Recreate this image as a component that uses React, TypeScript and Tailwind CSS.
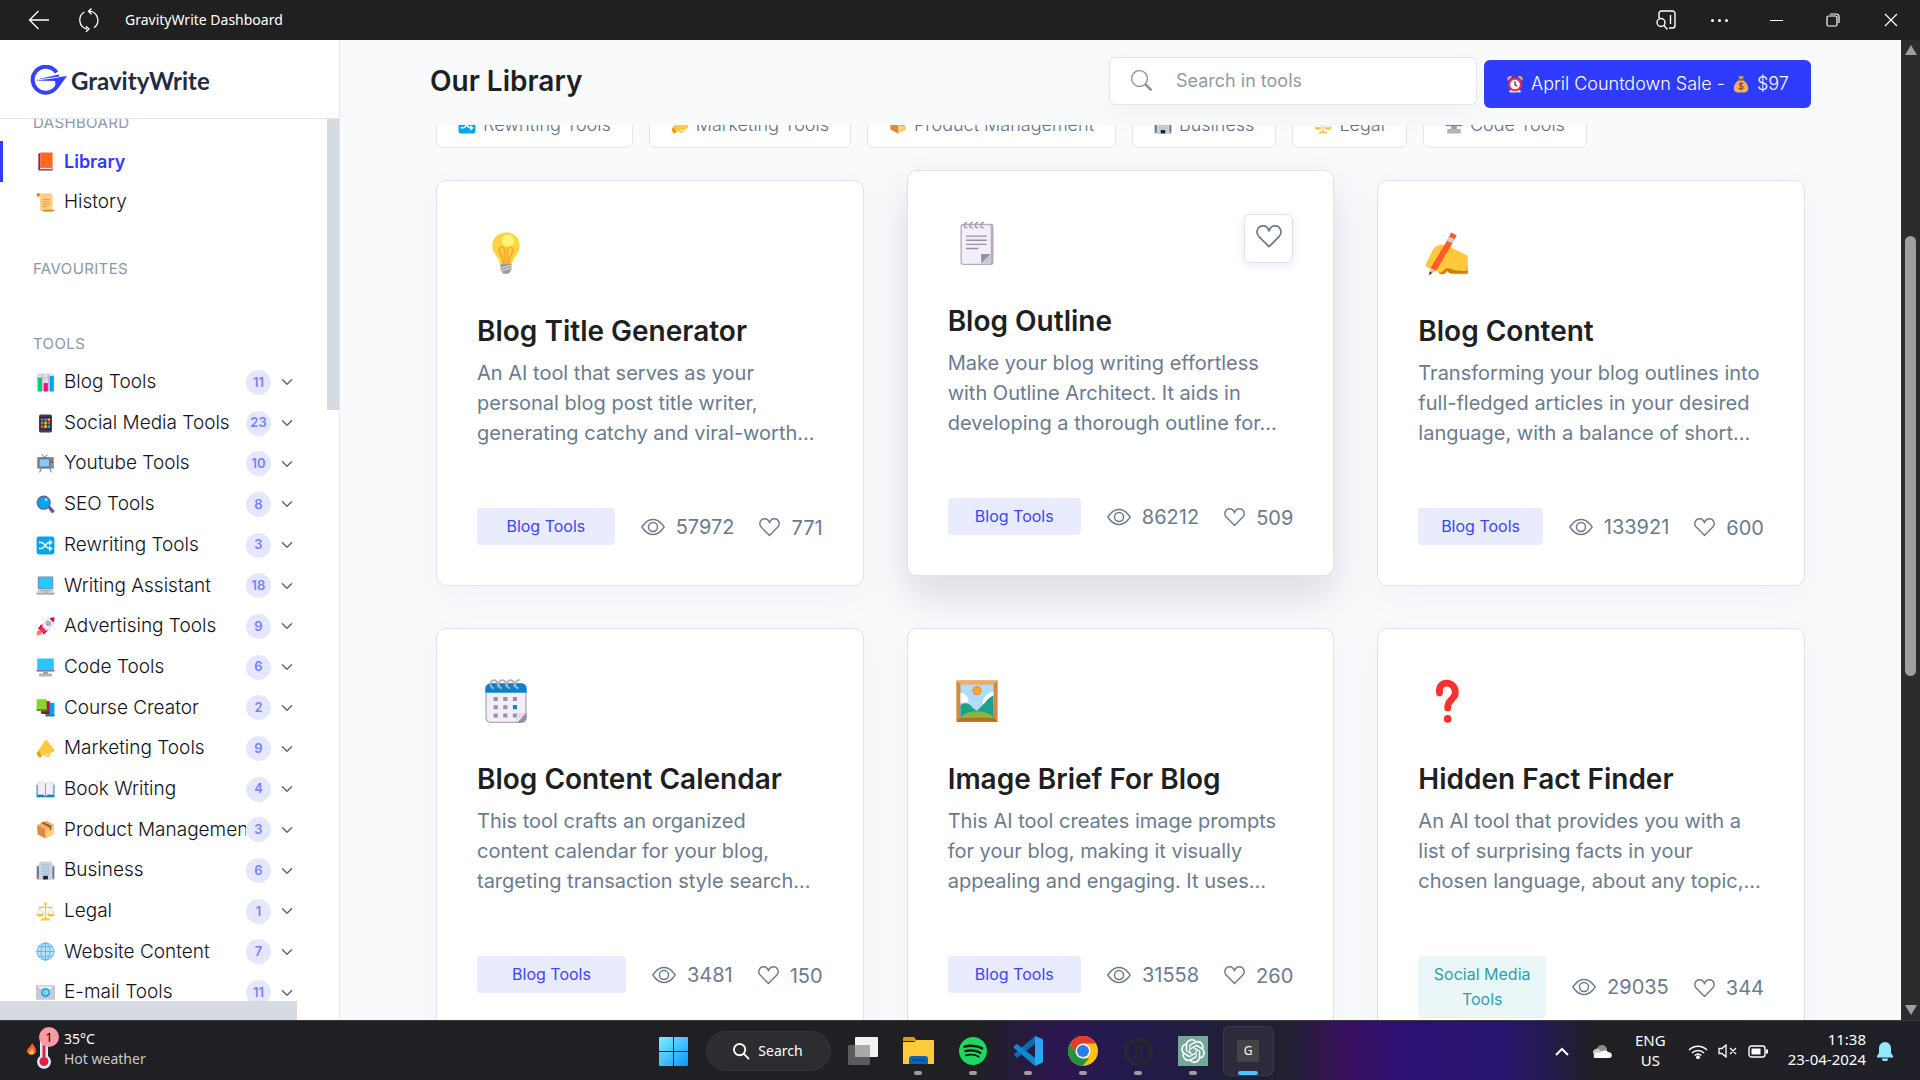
import type { ReactNode } from "react";
import { BsEye, BsSearch, BsChevronDown } from "react-icons/bs";
import { SiSpotify, SiOpenai } from "react-icons/si";

const artwork: Record<string, ReactNode> = {
  redBook: (
    <>
      <path d="M5 2h2v27H5a2 2 0 0 1-1-2V4a2 2 0 0 1 1-2z" fill="#9c1c4f" />
      <path d="M4 26h24v4a1 1 0 0 1-1 1H6a2 2 0 0 1-2-2z" fill="#9c1c4f" />
      <path d="M7 27h20v2H7z" fill="#f3eef8" />
      <rect x="7" y="1" width="21" height="25" rx="1" fill="#ff6723" />
    </>
  ),
  scroll: (
    <>
      <path d="M4 1h20a4 4 0 0 1 4 4v24a2 2 0 0 1-2 2H11a4 4 0 0 1-4-4V5z" fill="#ffce7c" />
      <path d="M1 3a2 2 0 0 1 5-1c1 1 1 3 0 4H2C1 5 1 4 1 3z" fill="#d3883e" />
      <path d="M14 28h17c0 2-1 3-3 3H13c-2 0-2-2 1-3z" fill="#d3883e" />
      <path d="M11 11h13M11 15h13M11 19h13M11 23h7" stroke="#e39d54" strokeWidth="1.6" />
    </>
  ),
  barChart: (
    <>
      <rect x="1" y="1" width="30" height="30" rx="3" fill="#e1d8ec" />
      <path d="M1 8h30M11 1v30M21 1v30" stroke="#b4acbc" strokeWidth="1" />
      <rect x="3" y="8" width="7" height="23" rx="1" fill="#00d26a" />
      <rect x="13" y="17" width="7" height="14" rx="1" fill="#f70a8d" />
      <rect x="23" y="5" width="7" height="26" rx="1" fill="#00a6ed" />
    </>
  ),
  phone: (
    <>
      <rect x="5" y="1" width="22" height="30" rx="3" fill="#433b6b" />
      <rect x="7" y="5" width="18" height="21" fill="#1c1c1c" />
      <path d="M8 7h5v5H8zM19 12h5v6h-5zM8 18h5v6H8z" fill="#f8512f" />
      <path d="M13 7h6v5h-6zM8 12h5v6H8zM19 18h5v6h-5z" fill="#2a9fd8" />
      <path d="M19 7h5v5h-5zM13 12h6v6h-6zM13 18h6v6h-6z" fill="#ffb02e" />
      <path d="M13 7v17M19 7v17M8 12h16M8 18h16" stroke="#1c1c1c" strokeWidth="1" />
    </>
  ),
  tv: (
    <>
      <path d="m10 1 5 5 4-5M9 24l-3 7M23 24l3 7" stroke="#636363" strokeWidth="1.6" fill="none" />
      <rect x="2" y="5" width="28" height="20" rx="2" fill="#8f8b90" />
      <rect x="5" y="8" width="18" height="14" rx="2" fill="#83cbff" stroke="#5a5660" strokeWidth="1.4" />
      <circle cx="27" cy="9.500" r="1.500" fill="#f8312f" />
      <circle cx="27" cy="14" r="1.200" fill="#402a32" />
    </>
  ),
  magnifier: (
    <>
      <path d="m19 20 3-3 9 9c1 3-2 5-5 4z" fill="#635994" />
      <circle cx="13" cy="13" r="12" fill="#635994" />
      <circle cx="13" cy="13" r="10" fill="#00a6ed" />
      <circle cx="17" cy="8" r="2.500" fill="#9fe0ff" />
    </>
  ),
  shuffle: (
    <>
      <rect x="1" y="1" width="30" height="30" rx="4" fill="#00a6ed" />
      <path d="M5 11h4c6 0 7 10 13 10h3M5 21h4c6 0 7-10 13-10h3" stroke="#fff" strokeWidth="2.500" fill="none" />
      <path d="m22 6 6 5-6 5zM22 16l6 5-6 5z" fill="#fff" />
    </>
  ),
  laptop: (
    <>
      <rect x="3" y="1" width="26" height="21" rx="1" fill="#8878a8" />
      <rect x="4.500" y="2" width="23" height="19" fill="#26c9fc" />
      <path d="M4 22h24l3 7v2H1v-2z" fill="#d3d3d3" />
      <path d="M1 29h30v2H1z" fill="#9b9b9b" />
      <path d="M6 24h20M11 27h10" stroke="#999" strokeWidth="1.200" />
    </>
  ),
  rocket: (
    <>
      <path d="M1 31c0-5 1-8 5-10l5 5c-2 4-6 5-10 5z" fill="#ff8257" />
      <path d="m3 20 5-7 8-1-4 12-3-3zM20 16l-1 8-7 6-1-5z" fill="#ca0b4a" />
      <path d="M31 1c-9 0-17 6-21 15l-1 5 3 3 5-1C26 19 31 10 31 1z" fill="#f4f4f4" stroke="#d58aa0" strokeWidth=".8" />
      <path d="M31 1c-3 0-6 0-8 2l6 6c2-3 2-5 2-8z" fill="#ca0b4a" />
      <circle cx="21" cy="11" r="3.600" fill="#83cbff" stroke="#8878a8" strokeWidth="1.400" />
      <path d="m10 15-4 7 4 4 7-4z" fill="#f92f60" />
    </>
  ),
  desktop: (
    <>
      <rect x="2" y="1" width="28" height="20" rx="1" fill="#26c9fc" />
      <path d="M1 20h30v3H1z" fill="#8878a8" />
      <path d="M12 23h8v4h-8z" fill="#9b9b9b" />
      <rect x="5" y="26" width="22" height="5" rx="1" fill="#b4b4b4" />
    </>
  ),
  terminal: (
    <>
      <rect x="2" y="1" width="28" height="14" rx="1" fill="#26c9fc" />
      <path d="M1 14h30v4H1z" fill="#8878a8" />
      <path d="M11 18h10v5H11z" fill="#9b9b9b" />
      <rect x="4" y="23" width="24" height="8" rx="1" fill="#b4b4b4" />
    </>
  ),
  books: (
    <>
      <path d="M18 8h13v22H16z" fill="#00a6ed" />
      <path d="M16 28h15v3H16z" fill="#0074ba" />
      <path d="M10 5h13v21H8z" fill="#ca0b4a" />
      <path d="M10 24h13v3H10z" fill="#990838" />
      <path d="M1 2h17v18H1z" fill="#86d72f" />
      <path d="M1 19h17v3H3a2 2 0 0 1-2-2z" fill="#44911b" />
    </>
  ),
  megaphone: (
    <>
      <path d="m14 25 9-3c3 6-6 10-9 3z" fill="none" stroke="#ffb02e" strokeWidth="2" />
      <path d="M15 2c2-1 4 0 5 2l11 14c0 2-1 4-3 4L8 29l-5-8z" fill="#ffc83d" />
      <path d="m2 22 3-2 5 9-3 2C4 31 0 25 2 22z" fill="#e39d1e" />
    </>
  ),
  openBook: (
    <>
      <path d="M1 8h30v20a1 1 0 0 1-1 1H2a1 1 0 0 1-1-1z" fill="#0084ce" />
      <path d="M3 5c5-2 10-2 13 1 3-3 8-3 13-1v20c-5-1-10-1-13 2-3-3-8-3-13-2z" fill="#f3eef8" stroke="#cdc4d6" strokeWidth="1" />
      <path d="M16 6v20" stroke="#998ea4" strokeWidth="1.500" />
    </>
  ),
  parcel: (
    <>
      <path d="M2 9 17 1l13 7v16l-14 7L3 24z" fill="#f3ad61" />
      <path d="M2 9l14 8v14L3 24z" fill="#dc8744" />
      <path d="M30 8l-14 9v14l14-7z" fill="#ffce7c" />
      <path d="m9 5 14 8v5l3-2v-6L12 3z" fill="#9b5a35" />
    </>
  ),
  office: (
    <>
      <path d="M1 8h30v23H1z" fill="#8f95a0" />
      <path d="M7 1h18l3 4v26H5V5z" fill="#cdd1d8" />
      <path d="M10 5h3v3h-3zM14.500 5h3v3h-3zM19 5h3v3h-3zM10 10h3v3h-3zM14.500 10h3v3h-3zM19 10h3v3h-3zM10 15h3v3h-3zM14.500 15h3v3h-3zM19 15h3v3h-3zM10 20h3v3h-3zM14.500 20h3v3h-3zM19 20h3v3h-3z" fill="#83cbff" />
      <path d="M12 25h8v6h-8z" fill="#222" />
      <path d="M2 11h2v17H2zM28 11h2v17h-2z" fill="#636a75" />
    </>
  ),
  scales: (
    <>
      <path d="M15 3h2v25h-2zM4 8h24v2H4z" fill="#d9c19a" />
      <circle cx="16" cy="3" r="2" fill="#ffb02e" />
      <path d="M7 9 2 20M7 9l5 11M25 9l-5 11M25 9l5 11" stroke="#c5bcae" strokeWidth="1" />
      <path d="M1 20h12c0 6-12 6-12 0zM19 20h12c0 6-12 6-12 0z" fill="#fcbe34" />
      <path d="M8 31c0-4 5-4 8-4s8 0 8 4z" fill="#ffc83d" />
    </>
  ),
  globe: (
    <>
      <circle cx="16" cy="16" r="14.500" fill="#b9e2ff" stroke="#58b4ef" strokeWidth="1.500" />
      <path d="M16 1v30M1 16h30M4 8h24M4 24h24" stroke="#58b4ef" strokeWidth="1.500" />
      <ellipse cx="16" cy="16" rx="7.500" ry="14.500" fill="none" stroke="#58b4ef" strokeWidth="1.500" />
    </>
  ),
  email: (
    <>
      <rect x="0" y="4" width="32" height="24" rx="1" fill="#cdc4d6" />
      <path d="m0 5 16 13L32 5z" fill="#f3eef8" stroke="#b4acbc" strokeWidth="1" />
      <circle cx="16" cy="16" r="7.500" fill="#00a6ed" />
      <circle cx="16" cy="16" r="2" fill="none" stroke="#fff" strokeWidth="1.200" />
      <path d="M18 14v3c2 2 3-1 2-3-2-4-9-2-8 2 0 4 4 5 7 3" fill="none" stroke="#fff" strokeWidth="1.200" />
    </>
  ),
  alarm: (
    <>
      <path d="m3 10 8-7C7-1 0 4 3 10zM29 10l-8-7c4-4 11 1 8 7z" fill="#ffb02e" />
      <path d="M6 27h20v4H6z" fill="#e6e6e6" />
      <circle cx="16" cy="17" r="12" fill="#f8312f" />
      <circle cx="16" cy="17" r="8.500" fill="#fff" />
      <path d="M16 11v6l4 3" stroke="#321b41" strokeWidth="2" fill="none" />
    </>
  ),
  moneybag: (
    <>
      <path d="M11 1l3 2 2-2 2 2 3-2-2 7h-6z" fill="#e39d54" />
      <path d="M12 9h8c5 4 9 9 9 15 0 5-4 7-8 7H11c-4 0-8-2-8-7 0-6 4-11 9-15z" fill="#f3ad61" />
      <path d="M11 7h10v3H11z" fill="#8c5543" />
      <path d="M20 16c-2-2-7-2-7 1s7 2 7 5-5 4-8 1M16 12v15" stroke="#7a4a2e" strokeWidth="1.800" fill="none" />
    </>
  ),
  bulb: (
    <>
      <path d="M16 1c-6 0-10 4-10 10 0 5 5 8 6 14h8c1-6 6-9 6-14 0-6-4-10-10-10z" fill="#fcd53f" />
      <path d="M14 24c0-6-3-8-3-10 0-3 4-3 4 0v10M18 24c0-6 3-8 3-10 0-3-4-3-4 0v10" fill="none" stroke="#ffa62e" strokeWidth="1.300" />
      <ellipse cx="17.500" cy="7" rx="4.500" ry="4.500" fill="#fff478" />
      <path d="M12 24h8v4l-2 3h-4l-2-3z" fill="#9b9b9b" />
      <path d="m12 27 8-2M12 29l8-2" stroke="#d3d3d3" strokeWidth="1" />
    </>
  ),
  notepad: (
    <>
      <rect x="4" y="2" width="24" height="30" rx="2" fill="#b4acbc" />
      <rect x="5" y="3" width="21" height="28" rx="1" fill="#f3eef8" />
      <path d="M19 31v-7h7z" fill="#998ea4" />
      <path d="m19 31 7-7v7z" fill="#cdc4d6" />
      <path d="M8 11h15M8 14h15M8 17h15M8 20h9" stroke="#998ea4" strokeWidth="1" />
      <path d="M9 5c-4 0-2-4 0-4M13 5c-4 0-2-4 0-4M17 5c-4 0-2-4 0-4M21 5c-4 0-2-4 0-4" fill="none" stroke="#9b9b9b" strokeWidth="1" />
    </>
  ),
  writing: (
    <>
      <path d="M12 10c-4 0-6 3-7 5L1 23c-1 3 1 4 3 4h6l7-6 13 10h1V18l-16-8z" fill="#ffc83d" />
      <path d="M9 27c0 5 5 6 7 2 2 3 6 2 15 2v-4l-14-3z" fill="#d67d00" />
      <path d="M19 1l4 2-3 6-4-2z" fill="#ff5c29" />
      <path d="m17.500 4 4 2-1.500 3-4-2z" fill="#ccc" />
      <path d="m16 7 4 2L8 29l-4-2z" fill="#ff5c29" />
      <path d="m3 32 1-5 4 2z" fill="#f9b5a5" />
      <path d="m3 32 .500-2.500L5 30.500z" fill="#111" />
      <path d="M14 18c3 2 0 5-3 7-2 2-3 4-1 5 3 1 4-3 6-3 3 0 4 2 14 2l1-2V18l-11-5z" fill="#ffc83d" />
    </>
  ),
  calendar: (
    <>
      <rect x="1" y="3" width="30" height="29" rx="4" fill="#b4acbc" />
      <rect x="2" y="4" width="28" height="27" rx="3" fill="#f3eef8" />
      <path d="M1 10V7a4 4 0 0 1 4-4h22a4 4 0 0 1 4 4v3z" fill="#0084ce" />
      <path d="M7 13h3v3H7zM14 13h3v3h-3zM21 13h3v3h-3zM7 19h3v3H7zM14 19h3v3h-3zM7 25h3v3H7zM14 25h3v3h-3zM21 25h3v3h-3z" fill="#998ea4" />
      <path d="M21 19h3v3h-3z" fill="#0084ce" />
      <path d="m24 32 7-8v4c0 3-3 4-7 4z" fill="#998ea4" />
      <path d="m23 31 1-6 7-1z" fill="#e1d8ec" />
      <path d="M7 7C3 5 5 0 8 1s2 4 2 5M13 7c-4-2-2-7 1-6s2 4 2 5M19 7c-4-2-2-7 1-6s2 4 2 5" fill="none" stroke="#b4acbc" strokeWidth="1.300" />
      <path d="M25 7c-4-2-2-7 1-6" fill="none" stroke="#b4acbc" strokeWidth="1.300" />
    </>
  ),
  picture: (
    <>
      <path d="M1 1h30v30H1z" fill="#d3883e" />
      <path d="M1 1h30l-3 3H4z" fill="#f3ad61" />
      <path d="m1 31 3-3h24l3 3z" fill="#ba6b24" />
      <path d="M4 4h24v24H4z" fill="#aeddff" />
      <path d="M4 10c3 0 6 3 6 7H4zM28 9c-4 1-8 4-8 9h8z" fill="#fff" />
      <circle cx="16" cy="8.500" r="3" fill="#ffa62e" stroke="#ff822d" strokeWidth=".8" />
      <path d="M4 19c3-2 6-2 9 2l3 2 6-6c2-3 4-4 6-5v16H4z" fill="#1aa38a" />
      <path d="M4 28c5-6 19-6 24 0z" fill="#86b83f" />
    </>
  ),
  question: (
    <>
      <path d="M10.500 10c-1-10 12.500-9 11.500 1-1 4-5.500 4-5.500 10" fill="none" stroke="#f8312f" strokeWidth="5" strokeLinecap="round" />
      <circle cx="16.500" cy="29" r="2.800" fill="#f8312f" />
    </>
  ),
};

function Emoji({ name, className }: { name: string; className: string }) {
  return (
    <svg viewBox="0 0 32 32" className={className} aria-hidden="true">
      {artwork[name]}
    </svg>
  );
}

function Heart({ className }: { className: string }) {
  return (
    <svg viewBox="0 0 24 21" className={className} fill="none" stroke="currentColor" strokeWidth="1.600" strokeLinejoin="round" aria-hidden="true">
      <path d="M12 20 2.500 10.400C-.8 6.500 1.600.8 6.500.8c3.200 0 4.700 2 5.500 4.700C12.800 2.800 14.300.8 17.500.8c4.900 0 7.300 5.700 4 9.600z" />
    </svg>
  );
}

const tools = [
  { icon: "barChart", label: "Blog Tools", count: 11 },
  { icon: "phone", label: "Social Media Tools", count: 23 },
  { icon: "tv", label: "Youtube Tools", count: 10 },
  { icon: "magnifier", label: "SEO Tools", count: 8 },
  { icon: "shuffle", label: "Rewriting Tools", count: 3 },
  { icon: "laptop", label: "Writing Assistant", count: 18 },
  { icon: "rocket", label: "Advertising Tools", count: 9 },
  { icon: "desktop", label: "Code Tools", count: 6 },
  { icon: "books", label: "Course Creator", count: 2 },
  { icon: "megaphone", label: "Marketing Tools", count: 9 },
  { icon: "openBook", label: "Book Writing", count: 4 },
  { icon: "parcel", label: "Product Management", count: 3 },
  { icon: "office", label: "Business", count: 6 },
  { icon: "scales", label: "Legal", count: 1 },
  { icon: "globe", label: "Website Content", count: 7 },
  { icon: "email", label: "E-mail Tools", count: 11 },
];

const chips = [
  { icon: "shuffle", label: "Rewriting Tools" },
  { icon: "megaphone", label: "Marketing Tools" },
  { icon: "parcel", label: "Product Management" },
  { icon: "office", label: "Business" },
  { icon: "scales", label: "Legal" },
  { icon: "terminal", label: "Code Tools" },
];

type Card = {
  icon: string;
  title: string;
  text: string[];
  tag: string;
  teal?: boolean;
  raised?: boolean;
  views: number;
  likes: number;
};

const cards: Card[] = [
  { icon: "bulb", title: "Blog Title Generator", text: ["An AI tool that serves as your", "personal blog post title writer,", "generating catchy and viral-worth..."], tag: "Blog Tools", views: 57972, likes: 771 },
  { icon: "notepad", title: "Blog Outline", text: ["Make your blog writing effortless", "with Outline Architect. It aids in", "developing a thorough outline for..."], tag: "Blog Tools", raised: true, views: 86212, likes: 509 },
  { icon: "writing", title: "Blog Content", text: ["Transforming your blog outlines into", "full-fledged articles in your desired", "language, with a balance of short..."], tag: "Blog Tools", views: 133921, likes: 600 },
  { icon: "calendar", title: "Blog Content Calendar", text: ["This tool crafts an organized", "content calendar for your blog,", "targeting transaction style search..."], tag: "Blog Tools", views: 3481, likes: 150 },
  { icon: "picture", title: "Image Brief For Blog", text: ["This AI tool creates image prompts", "for your blog, making it visually", "appealing and engaging. It uses..."], tag: "Blog Tools", views: 31558, likes: 260 },
  { icon: "question", title: "Hidden Fact Finder", text: ["An AI tool that provides you with a", "list of surprising facts in your", "chosen language, about any topic,..."], tag: "Social Media Tools", teal: true, views: 29035, likes: 344 },
];

function TitleBar() {
  return (
    <header className="flex h-10 shrink-0 items-center bg-[#202020] font-['Noto_Sans',sans-serif] text-white">
      <button aria-label="Back" className="ml-[27px] flex w-6 justify-center">
        <svg viewBox="0 0 22 20" className="h-5 w-[22px]" fill="none" stroke="currentColor" strokeWidth="1.300">
          <path d="M21 10H1.500M10.500 1 1.500 10l9 9" />
        </svg>
      </button>
      <button aria-label="Refresh" className="ml-[26px] flex w-6 justify-center">
        <svg viewBox="0 0 22 24" className="h-6 w-[22px]" fill="none" stroke="currentColor" strokeWidth="1.300">
          <path d="M6.500 4A9.200 9.200 0 0 0 9 21M11.500 3.200a9.200 9.200 0 0 1 4.500 16.600M13.500.5l-3 2.800 3 3M8 18.300l3 2.700-3 2.800" />
        </svg>
      </button>
      <span className="ml-6 text-sm">GravityWrite Dashboard</span>
      <div className="ml-auto flex items-center">
        <button aria-label="Search sidebar" className="flex w-12 justify-center">
          <svg viewBox="0 0 20 20" className="size-5" fill="none" stroke="currentColor" strokeWidth="1.400">
            <path d="M3 8V3.500A2.500 2.500 0 0 1 5.500 1h11A2.500 2.500 0 0 1 19 3.500v12a2.500 2.500 0 0 1-2.500 2.500H13M14.500 5v9" />
            <circle cx="5" cy="12.500" r="4" />
            <path d="m8 15.500 3.500 4" />
          </svg>
        </button>
        <button aria-label="More" className="flex w-[58px] justify-center gap-1">
          <i className="size-[3px] rounded-full bg-white" />
          <i className="size-[3px] rounded-full bg-white" />
          <i className="size-[3px] rounded-full bg-white" />
        </button>
        <button aria-label="Minimize" className="flex w-14 justify-center">
          <i className="h-px w-[13px] bg-white" />
        </button>
        <button aria-label="Restore" className="flex w-[58px] justify-center">
          <svg viewBox="0 0 14 14" className="size-3.5" fill="none" stroke="currentColor" strokeWidth="1.200">
            <rect x="1" y="3" width="10" height="10" rx="1.500" />
            <path d="M4 1h6.500A2.500 2.500 0 0 1 13 3.500V10" />
          </svg>
        </button>
        <button aria-label="Close" className="flex w-[58px] justify-center">
          <svg viewBox="0 0 14 14" className="size-3.5" stroke="currentColor" strokeWidth="1.200">
            <path d="m1 1 12 12M13 1 1 13" />
          </svg>
        </button>
      </div>
    </header>
  );
}

function Sidebar() {
  return (
    <aside className="flex w-[340px] shrink-0 flex-col border-r border-[#e4e6ea] bg-white">
      <div className="flex h-[79px] shrink-0 items-center gap-1 border-b border-[#e4e6ea] pl-[30px] pt-0.5">
        <svg viewBox="0 0 37 30" className="h-[30px] w-[37px]" aria-hidden="true">
          <path d="M26.500 7.500A13 13 0 1 0 28.500 17" fill="none" stroke="#3442ff" strokeWidth="4" />
          <path d="M4 15.500 37 11l-8 11-3 2-1-8z" fill="#3442ff" />
          <path d="m4 15 25-5.500v2.500z" fill="#3442ff" />
          <path d="m5 15.200 24-3" stroke="#fff" strokeWidth=".8" />
        </svg>
        <span className="pt-0.5 font-['Lato',sans-serif] text-2xl font-bold text-[#1f2d45]">GravityWrite</span>
      </div>
      <div className="relative min-h-0 flex-1 overflow-hidden">
        <nav aria-label="Tools" className="-mt-2 w-[297px]">
          <h2 className="pl-[33px] text-[15px] leading-6 tracking-wide text-[#8a98a6]">DASHBOARD</h2>
          <a href="#library" className="mt-1.5 flex h-[41px] items-center gap-[9px] border-l-[3px] border-[#2f3cff] pl-[33px] text-lg font-semibold text-[#2f3cff]">
            <Emoji name="redBook" className="size-[19px]" />
            Library
          </a>
          <a href="#history" className="flex h-10 items-center gap-[9px] pl-9 text-[19px] font-light text-[#111318]">
            <Emoji name="scroll" className="size-[19px]" />
            History
          </a>
          <h2 className="mt-[35px] pl-[33px] text-[15px] leading-6 tracking-wide text-[#8a98a6]">FAVOURITES</h2>
          <h2 className="mt-[51px] pl-[33px] text-[15px] leading-6 tracking-wide text-[#8a98a6]">TOOLS</h2>
          <ul className="mt-1.5 grid h-[651px] auto-rows-fr grid-cols-1">
            {tools.map((tool) => (
              <li key={tool.label} className="min-w-0">
                <button className="flex size-full items-center pl-9 pr-1 text-left text-[19px] font-light text-[#111318]">
                  <Emoji name={tool.icon} className="mr-[9px] size-[19px] shrink-0" />
                  <span className="min-w-0 flex-1 overflow-hidden whitespace-nowrap">{tool.label}</span>
                  <span className="flex size-[25px] shrink-0 items-center justify-center rounded-full bg-[#e5e7ff] text-[13px] font-semibold text-[#7b7eff]">
                    {tool.count}
                  </span>
                  <BsChevronDown className="ml-2.5 size-3 shrink-0 text-[#4a5568]" strokeWidth={1} />
                </button>
              </li>
            ))}
          </ul>
        </nav>
        <div className="absolute right-0 top-0 h-[291px] w-3 bg-[#d6dae2]" />
        <div className="absolute bottom-0 left-0 h-[19px] w-[297px] bg-[#d6dae2]" />
      </div>
    </aside>
  );
}

function ToolCard({ card }: { card: Card }) {
  return (
    <article
      className={
        card.raised
          ? "relative z-10 -translate-y-2.5 rounded-[10px] border border-[#e1e0f0] bg-white p-10 shadow-[0_20px_40px_rgba(20,15,45,0.13)]"
          : "rounded-[10px] border border-[#e1e0f0] bg-white p-10 shadow-[0_10px_40px_rgba(20,15,45,0.03)]"
      }
    >
      <div className="flex h-[89px] justify-between pl-[7px]">
        <Emoji name={card.icon} className="mt-2.5 size-11" />
        {card.raised && (
          <button aria-label="Add to favourites" className="mt-[3px] flex size-[49px] items-center justify-center rounded-md border border-[#e1def5] bg-white pb-1 text-[#6a7a8d] shadow-[0_2px_10px_rgba(90,70,200,0.12)]">
            <Heart className="w-[26px]" />
          </button>
        )}
      </div>
      <h3 className="text-[28px] font-semibold leading-[42px] text-[#1d1f22]">{card.title}</h3>
      <p className="mt-1.5 whitespace-nowrap text-xl leading-[30px] text-[#6b7b8e]">
        {card.text.map((line) => (
          <span key={line} className="block">
            {line}
          </span>
        ))}
      </p>
      <div className="mt-[60px] flex items-center text-xl text-[#6b7b8e]">
        <span
          className={
            card.teal
              ? "min-w-0 flex-1 rounded bg-[#eaf6f8] px-3 py-1.5 text-center text-base leading-[25px] text-[#309fae]"
              : "min-w-0 flex-1 rounded bg-[#e9ebff] px-3 py-1.5 text-center text-base leading-[25px] text-[#3b45fb]"
          }
        >
          {card.tag}
        </span>
        <span className="ml-[26px] flex items-center gap-[11px]">
          <BsEye className="size-6" aria-hidden="true" />
          {card.views}
        </span>
        <span className="ml-[25px] flex items-center gap-[11px] pt-0.5">
          <Heart className="w-[21px]" />
          {card.likes}
        </span>
      </div>
    </article>
  );
}

function Library() {
  return (
    <main className="flex min-w-0 flex-1 flex-col bg-[#f9fafc]">
      <div className="relative z-20 flex h-[85px] shrink-0 items-center bg-[#f9fafc] px-[90px]">
        <h1 className="mb-1 text-[28px] font-semibold text-[#1d1f22]">Our Library</h1>
        <label className="mb-1 ml-auto flex h-12 w-[368px] items-center rounded-md border border-[#e2e5ec] bg-white pl-[21px] shadow-[0_10px_30px_rgba(20,15,45,0.03)]">
          <BsSearch className="size-[21px] text-[#8a94a0]" aria-hidden="true" />
          <input aria-label="Search in tools" placeholder="Search in tools" className="ml-6 min-w-0 flex-1 bg-transparent text-lg outline-none placeholder:text-[#8f9ba8]" />
        </label>
        <button className="ml-[7px] mt-0.5 flex h-12 w-[327px] items-center justify-center gap-[7px] whitespace-nowrap rounded-md bg-[#2f3cff] text-lg font-light text-white">
          <Emoji name="alarm" className="size-[18px]" />
          <span>April Countdown Sale -</span>
          <Emoji name="moneybag" className="size-[18px]" />
          <span>$97</span>
        </button>
      </div>
      <div className="min-h-0 flex-1 overflow-hidden px-24">
        <div className="-mt-[25px] flex gap-4">
          {chips.map((chip) => (
            <button key={chip.label} className="flex h-12 items-center gap-[7px] whitespace-nowrap rounded-md border border-[#e2e5ec] bg-white px-[21px] pt-0.5 text-lg font-light text-[#5f6f82]">
              <Emoji name={chip.icon} className="size-[18px]" />
              {chip.label}
            </button>
          ))}
        </div>
        <section aria-label="Tool cards" className="mt-8 grid grid-cols-3 gap-x-[43px] gap-y-[42px] pb-10">
          {cards.map((card) => (
            <ToolCard key={card.title} card={card} />
          ))}
        </section>
      </div>
    </main>
  );
}

function PageScrollbar() {
  return (
    <div className="flex w-[19px] shrink-0 flex-col items-center bg-[#2c2c2c] py-[5px]">
      <svg viewBox="0 0 12 10" className="w-3 fill-[#9f9f9f]">
        <path d="M6 0l6 10H0z" />
      </svg>
      <div className="mt-[181px] h-[440px] w-[11px] rounded-full bg-[#9f9f9f]" />
      <svg viewBox="0 0 12 10" className="mt-auto w-3 fill-[#9f9f9f]">
        <path d="M6 10 0 0h12z" />
      </svg>
    </div>
  );
}

function TaskIcon({ label, running, children }: { label: string; running?: boolean; children: ReactNode }) {
  return (
    <button aria-label={label} className="relative flex h-[60px] w-[55px] items-center justify-center">
      {children}
      {running && <i className="absolute bottom-1.5 h-1 w-2 rounded-full bg-[#a09ca6]" />}
    </button>
  );
}

function Taskbar() {
  return (
    <footer className="grid h-[60px] shrink-0 grid-cols-[1fr_auto_1fr] items-center border-t border-[#3c3c40] bg-[linear-gradient(90deg,#202024_0%,#202024_51%,#2c1650_55%,#211b4c_59%,#201f38_64%,#202030_67%,#38105c_70%,#2b1172_73%,#291470_78%,#241b48_81%,#202024_83%,#1f2028_100%)] font-['Noto_Sans',sans-serif] text-[15px] leading-5 text-white">
      <div className="flex items-center pb-1 pl-[27px]">
        <div className="relative h-11 w-[37px]">
          <svg viewBox="0 0 32 36" className="h-9 w-8 translate-y-1.5" aria-hidden="true">
            <path d="M5 10c2 3 4 5 4 8 0 5-9 5-9 0 0-3 4-4 5-8z" fill="#f4622c" />
            <path d="M5 15c1 2 2 3 2 5s-5 2-5 0 2-2 3-5z" fill="#ffb340" />
            <path d="M13 8a4 4 0 0 1 8 0v15a7 7 0 1 1-8 0z" fill="#d6ecfa" />
            <path d="M15.500 12h3v12h-3z" fill="#e0203f" />
            <circle cx="17" cy="28.500" r="4.500" fill="#e0203f" />
          </svg>
          <span className="absolute left-3 top-0 flex size-5 items-center justify-center rounded-full bg-[#ff99a4] text-[13px] text-black">1</span>
        </div>
        <div className="text-sm leading-5">
          <div>35°C</div>
          <div className="text-[#c9c9cb]">Hot weather</div>
        </div>
      </div>

      <div className="flex items-center pl-px">
        <TaskIcon label="Start">
          <svg viewBox="0 0 29 29" className="size-[29px]">
            <defs>
              <linearGradient id="start" x1="0" y1="0" x2="1" y2="1">
                <stop offset="0" stopColor="#7df0ff" />
                <stop offset="1" stopColor="#0a94ff" />
              </linearGradient>
            </defs>
            <path d="M1 0h13v14H0V1a1 1 0 0 1 1-1zM15 0h13a1 1 0 0 1 1 1v13H15zM0 15h14v14H1a1 1 0 0 1-1-1zM15 15h14v13a1 1 0 0 1-1 1H15z" fill="url(#start)" />
          </svg>
        </TaskIcon>
        <button className="mx-[5px] flex h-10 w-[125px] items-center justify-center gap-2 rounded-full border border-[#353538] bg-[#2d2d31] text-sm">
          <svg viewBox="0 0 18 18" className="size-[17px]" fill="none" stroke="currentColor" strokeWidth="2">
            <circle cx="7" cy="7" r="6" />
            <path d="m11 11 6 6" />
          </svg>
          Search
        </button>
        <TaskIcon label="Task view">
          <svg viewBox="0 0 30 28" className="h-7 w-[30px]">
            <rect x="7" y="0" width="23" height="20" rx="1" fill="#f2f2f2" />
            <rect x="0" y="8" width="22" height="20" rx="1" fill="#5b5b5d" />
            <path d="M7 8h15v12H7z" fill="#a9a9ab" />
          </svg>
        </TaskIcon>
        <TaskIcon label="File Explorer" running>
          <svg viewBox="0 0 31 28" className="h-7 w-[31px]">
            <path d="M0 1.500A1.500 1.500 0 0 1 1.500 0H11l3 4H0z" fill="#e09a0b" />
            <path d="M0 5h11l3-2h16a1 1 0 0 1 1 1v23H0z" fill="#ffcb3d" />
            <path d="M6 27v-5a3 3 0 0 1 3-3h13a3 3 0 0 1 3 3v5z" fill="#0c66b8" />
            <path d="M9 23h13" stroke="#053b77" strokeWidth="1.200" />
          </svg>
        </TaskIcon>
        <TaskIcon label="Spotify" running>
          <span className="flex rounded-full bg-[#101410]">
            <SiSpotify className="size-7 text-[#1ed760]" />
          </span>
        </TaskIcon>
        <TaskIcon label="Visual Studio Code" running>
          <svg viewBox="0 0 30 30" className="size-[30px]">
            <path d="m22 8-18 14-3-3v-1L22 0z" fill="#0a6cb4" />
            <path d="m22 22-18-14-3 2v2l21 18z" fill="#0f88cf" />
            <path d="m22 0 7 3a1 1 0 0 1 1 1v22l-1 1-7 3z" fill="#27a7f2" />
          </svg>
        </TaskIcon>
        <TaskIcon label="Chrome" running>
          <svg viewBox="0 0 30 30" className="size-[30px]">
            <circle cx="15" cy="15" r="15" fill="#fbc116" />
            <path d="M2 7.500a15 15 0 0 1 26 0H15l-6.500 11z" fill="#e33b2e" />
            <path d="M2 7.500 8.500 18.700 15 22.500h6L14.500 30A15 15 0 0 1 2 7.500z" fill="#229342" />
            <circle cx="15" cy="15" r="7.500" fill="#fff" />
            <circle cx="15" cy="15" r="6" fill="#2b7de9" />
          </svg>
        </TaskIcon>
        <TaskIcon label="App" running>
          <svg viewBox="0 0 29 29" className="size-[29px]" fill="none" stroke="#26282e" strokeWidth="4">
            <circle cx="14.500" cy="14.500" r="12.500" />
            <path d="M12 6v17M17 6v17" strokeWidth="2.500" />
          </svg>
        </TaskIcon>
        <TaskIcon label="ChatGPT" running>
          <span className="flex size-[30px] items-center justify-center bg-[#74a899]">
            <SiOpenai className="size-6" />
          </span>
        </TaskIcon>
        <button aria-label="GravityWrite" className="relative mx-0.5 flex h-[50px] w-[51px] items-center justify-center rounded-md border border-[#3a3948] bg-[#2d2b3b]">
          <span className="flex size-[22px] items-center justify-center bg-[#444444] text-xs">G</span>
          <i className="absolute bottom-0 h-1 w-5 rounded-full bg-[#4cc2ff]" />
        </button>
      </div>

      <div className="flex items-center justify-end pr-[27px]">
        <svg viewBox="0 0 14 9" className="w-3.5" fill="none" stroke="currentColor" strokeWidth="2">
          <path d="m1 8 6-6 6 6" />
        </svg>
        <svg viewBox="0 0 20 14" className="ml-[23px] w-5">
          <path d="M5 7a5 5 0 0 1 10-2v6H5z" fill="#8d8d8f" />
          <path d="M1 9a4 4 0 0 1 7-3l9 6H3z" fill="#c7c7c7" />
          <path d="M2 11c0-2 3-3 6-2 3-3 6-3 8-1 5 0 5 6 1 6H4c-2 0-3-1-2-3z" fill="#fff" />
        </svg>
        <div className="ml-[23px] pb-0.5 text-center">
          <div>ENG</div>
          <div>US</div>
        </div>
        <svg viewBox="0 0 20 15" className="ml-[22px] w-5" fill="none" stroke="currentColor" strokeWidth="1.500">
          <path d="M1 6a12.500 12.500 0 0 1 18 0M4 9a8.500 8.500 0 0 1 12 0M6.700 11.500a5 5 0 0 1 6.600 0" />
          <circle cx="10" cy="13.200" r="1.200" fill="currentColor" />
        </svg>
        <svg viewBox="0 0 19 14" className="ml-2.5 w-[19px]" fill="none" stroke="currentColor" strokeWidth="1.300">
          <path d="M1 4.500v5h3l4 3.500V1L4 4.500zM12 4l6 6M18 4l-6 6" />
        </svg>
        <svg viewBox="0 0 20 13" className="ml-[11px] w-5" fill="none" stroke="currentColor" strokeWidth="1.400">
          <rect x="1" y="1" width="16" height="11" rx="2.500" />
          <rect x="3.500" y="3.500" width="9" height="6" fill="currentColor" stroke="none" />
          <path d="M19 4.500v4" strokeWidth="2" />
        </svg>
        <div className="ml-5 pb-1 text-right">
          <div>11:38</div>
          <div>23-04-2024</div>
        </div>
        <svg viewBox="0 0 16 19" className="ml-[11px] w-4 fill-[#8fe8ff]">
          <path d="M8 0a6 6 0 0 1 6 6v5l2 3v1.500H0V14l2-3V6a6 6 0 0 1 6-6zM5 16.500h6a3 3 0 0 1-6 0z" />
        </svg>
      </div>
    </footer>
  );
}

export default function App() {
  return (
    <div className="flex h-screen flex-col overflow-hidden bg-[#f9fafc] font-['Inter',sans-serif]">
      <TitleBar />
      <div className="flex min-h-0 flex-1">
        <Sidebar />
        <Library />
        <PageScrollbar />
      </div>
      <Taskbar />
    </div>
  );
}
